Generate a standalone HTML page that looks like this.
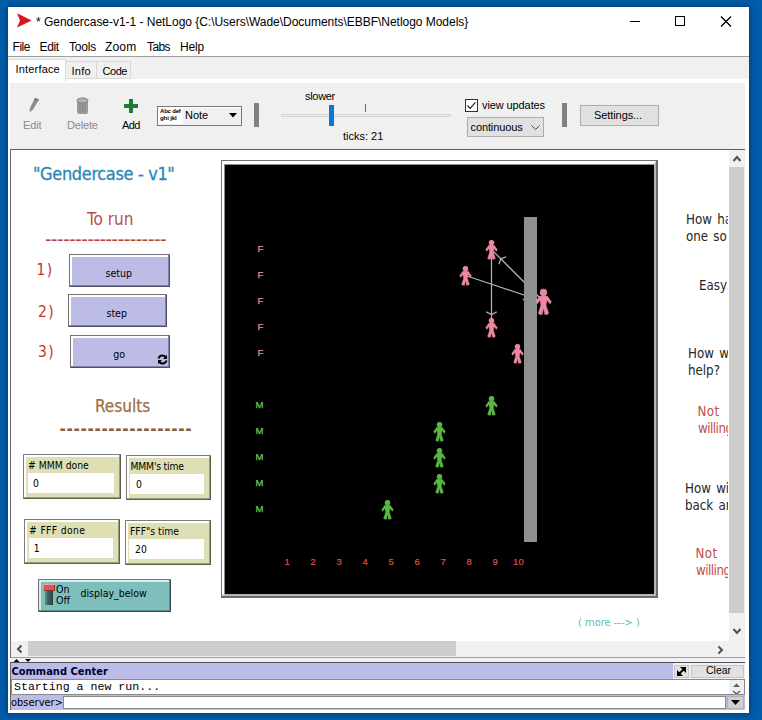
<!DOCTYPE html>
<html><head><meta charset="utf-8">
<style>
html,body{margin:0;padding:0;}
body{width:762px;height:720px;overflow:hidden;background:#005eab;position:relative;font-family:"Liberation Sans",sans-serif;font-size:12px;color:#000;}
.a{position:absolute;}
.t{position:absolute;white-space:nowrap;line-height:1;}
.w{font-family:"DejaVu Sans Condensed","DejaVu Sans","Liberation Sans",sans-serif;}
.btn{position:absolute;background:#bcbce6;box-sizing:border-box;box-shadow:inset 1px 1px 0 #747474, inset -1px -1px 0 #50506a, inset -2px -2px 0 #8282a6, inset 3px 3px 0 #fff;}
.mon{position:absolute;background:#dfdfb6;box-sizing:border-box;box-shadow:inset 1px 1px 0 #7c7c7c, inset -1px -1px 0 #606050, inset -2px -2px 0 #9a9a7c, inset 3px 3px 0 #fff;}
.mon .v{position:absolute;left:5px;right:7px;top:19px;height:20px;background:#fff;}
</style></head>
<body>
<!-- desktop / window frame -->
<div class="a" style="left:0;top:0;width:762px;height:720px;background:#005eab;"></div>
<div class="a" id="win" style="left:8px;top:7px;width:741px;height:706px;background:#fff;box-shadow:0 0 7px 1px rgba(0,30,70,.55);"></div>

<!-- title bar -->
<svg class="a" style="left:17px;top:13px" width="16" height="16" viewBox="0 0 16 16"><polygon points="0,0.300 14.700,7.400 0,14.500 3,7.400" fill="#d8151a"/></svg>
<div class="t" id="title" style="left:36px;top:16px;font-size:12px;letter-spacing:-0.03px;">* Gendercase-v1-1 - NetLogo {C:\Users\Wade\Documents\EBBF\Netlogo Models}</div>
<svg class="a" style="left:620px;top:11px" width="124" height="22" viewBox="0 0 124 22" fill="none" stroke="#000" stroke-width="1">
<path d="M10 10.5h10"/><rect x="55.5" y="5.500" width="9" height="9"/><path d="M101 5.500l10 10M111 5.500l-10 10" stroke-width="1.300"/></svg>

<!-- menu bar -->
<div class="t" style="left:12.500px;top:41px;font-size:12px;letter-spacing:-0.45px;">File</div>
<div class="t" style="left:39.500px;top:41px;font-size:12px;letter-spacing:-0.35px;">Edit</div>
<div class="t" style="left:69px;top:41px;font-size:12px;letter-spacing:-0.2px;">Tools</div>
<div class="t" style="left:105px;top:41px;font-size:12px;letter-spacing:0.15px;">Zoom</div>
<div class="t" style="left:147px;top:41px;font-size:12px;letter-spacing:-0.6px;">Tabs</div>
<div class="t" style="left:180px;top:41px;font-size:12px;letter-spacing:-0.2px;">Help</div>
<div class="a" style="left:8px;top:56px;width:741px;height:1px;background:#a0a0a0;"></div>

<!-- tab strip + pane background -->
<div class="a" style="left:8px;top:57px;width:741px;height:652px;background:#f0f0f0;"></div>
<div class="a" style="left:8px;top:79px;width:741px;height:4px;background:#fff;"></div>
<div class="a" style="left:8px;top:80px;width:2px;height:633px;background:#fff;"></div>
<div class="a" style="left:745px;top:80px;width:4px;height:633px;background:#fff;"></div>
<div class="a" style="left:8px;top:710px;width:741px;height:3px;background:#fff;"></div>
<div class="a" style="left:66px;top:61px;width:31px;height:18px;box-sizing:border-box;border:1px solid #d9d9d9;border-left:none;background:#f0f0f0;"></div>
<div class="a" style="left:97px;top:61px;width:34px;height:18px;box-sizing:border-box;border:1px solid #d9d9d9;border-left:none;background:#f0f0f0;"></div>
<div class="a" style="left:8px;top:59px;width:58px;height:23px;background:#fff;border-right:1px solid #d9d9d9;border-top:1px solid #d9d9d9;box-sizing:border-box;"></div>
<div class="t" style="left:15.500px;top:64px;font-size:11px;letter-spacing:0.18px;">Interface</div>
<div class="t" style="left:71.500px;top:66px;font-size:11px;letter-spacing:0.27px;">Info</div>
<div class="t" style="left:102.500px;top:66px;font-size:11px;letter-spacing:-0.45px;">Code</div>

<!-- toolbar -->
<div class="a" style="left:10px;top:149px;width:735px;height:1px;background:#5f5f5f;"></div>
<div class="a" style="left:10px;top:149px;width:1px;height:509px;background:#6a6a6a;"></div>
<div class="a" style="left:10px;top:662px;width:1px;height:48px;background:#6a6a6a;"></div>
<svg class="a" style="left:24px;top:96px" width="20" height="20" viewBox="0 0 20 20"><polygon points="11,2 15,3.500 9,13.500 5.500,16.500 6,12" fill="#8c8c8c"/><polygon points="11,2 15,3.500 14,5.300 10,3.800" fill="#757575"/></svg>
<div class="t" style="left:23px;top:120px;font-size:11px;letter-spacing:-0.15px;color:#8a8a8a;">Edit</div>
<svg class="a" style="left:73px;top:95px" width="20" height="22" viewBox="0 0 20 22"><path d="M4 6h11v11q0 2-2 2h-7q-2 0-2-2z" fill="#9a9a9a"/><ellipse cx="9.500" cy="5.500" rx="5.500" ry="2.500" fill="#b4b4b4" stroke="#7c7c7c" stroke-width="1"/><path d="M7 9v8M9.500 9v8M12 9v8" stroke="#858585" stroke-width="1"/></svg>
<div class="t" style="left:67px;top:120px;font-size:11px;letter-spacing:-0.18px;color:#8a8a8a;">Delete</div>
<svg class="a" style="left:122px;top:97px" width="18" height="18" viewBox="0 0 18 18"><path d="M7 2h4v5h5v4h-5v5h-4v-5h-5v-4h5z" fill="#1e7b34"/></svg>
<div class="t" style="left:122px;top:120px;font-size:11px;letter-spacing:-0.57px;">Add</div>
<!-- note combo -->
<div class="a" style="left:157px;top:106px;width:85px;height:20px;box-sizing:border-box;border:1px solid #7a7a7a;background:#f0f0f0;box-shadow:inset 1px 1px 0 #fff;"></div>
<div class="a" style="left:159px;top:108px;width:24px;height:16px;background:#fff;"></div>
<div class="t" style="left:160px;top:108px;font-size:6px;font-weight:bold;letter-spacing:-0.2px;">Abc def</div>
<div class="t" style="left:160px;top:115px;font-size:6px;font-weight:bold;letter-spacing:-0.1px;">ghi jkl</div>
<div class="t" style="left:185px;top:110px;font-size:11px;">Note</div>
<svg class="a" style="left:229px;top:113px" width="8" height="5" viewBox="0 0 8 5"><polygon points="0,0 8,0 4,4.500" fill="#000"/></svg>
<div class="a" style="left:254px;top:103px;width:5px;height:24px;background:#808080;"></div>
<!-- speed slider -->
<div class="t" style="left:305px;top:91px;font-size:11px;letter-spacing:-0.3px;">slower</div>
<div class="a" style="left:281px;top:114px;width:170px;height:3px;box-sizing:border-box;border:1px solid #d6d6d6;background:#e7eaea;"></div>
<div class="a" style="left:365px;top:104px;width:1px;height:8px;background:#6a6a6a;"></div>
<div class="a" style="left:329px;top:105px;width:5px;height:21px;background:#0a78d6;"></div>
<div class="t" style="left:343px;top:131px;font-size:11px;">ticks: 21</div>
<!-- view updates -->
<div class="a" style="left:465px;top:99px;width:13px;height:13px;box-sizing:border-box;border:1px solid #333;background:#fff;"></div>
<svg class="a" style="left:465px;top:99px" width="13" height="13" viewBox="0 0 13 13"><path d="M2.500 6.500l2.700 2.800l5.200-6" fill="none" stroke="#222" stroke-width="1.200"/></svg>
<div class="t" style="left:482px;top:100px;font-size:11px;letter-spacing:-0.1px;">view updates</div>
<div class="a" style="left:467px;top:117px;width:77px;height:20px;box-sizing:border-box;border:1px solid #adadad;background:#e1e1e1;"></div>
<div class="t" style="left:470.500px;top:122px;font-size:11px;letter-spacing:-0.12px;">continuous</div>
<svg class="a" style="left:531px;top:125px" width="10" height="6" viewBox="0 0 10 6"><path d="M0.500 0.500l4 4l4-4" fill="none" stroke="#444" stroke-width="1"/></svg>
<div class="a" style="left:562px;top:103px;width:5px;height:24px;background:#808080;"></div>
<div class="a" style="left:580px;top:105px;width:79px;height:21px;box-sizing:border-box;border:1px solid #adadad;background:#e1e1e1;"></div>
<div class="t" style="left:594px;top:110px;font-size:11px;letter-spacing:-0.08px;">Settings...</div>

<!-- workspace -->
<div class="a" id="ws" style="left:11px;top:150px;width:717px;height:491px;background:#fff;overflow:hidden;">
<div class="a" style="left:-11px;top:-150px;width:762px;height:720px;">
<!-- notes -->
<div class="t w" style="left:33px;top:165px;font-size:18px;letter-spacing:-0.35px;color:#2c86b8;-webkit-text-stroke:0.3px #2c86b8;">"Gendercase - v1"</div>
<div class="t w" style="left:87px;top:211px;font-size:17px;color:#b94f4a;">To run</div>
<div class="t w" style="left:45px;top:229px;font-size:20px;letter-spacing:-0.44px;color:#b3443e;">--------------------</div>
<div class="t w" style="left:36.500px;top:263px;font-size:15.500px;letter-spacing:1.500px;color:#c6302a;">1)</div>
<div class="t w" style="left:38px;top:305px;font-size:15.500px;letter-spacing:1.500px;color:#c6302a;">2)</div>
<div class="t w" style="left:38px;top:345px;font-size:15.500px;letter-spacing:1.500px;color:#c6302a;">3)</div>
<div class="btn" style="left:69px;top:254px;width:101px;height:33px;"></div>
<div class="t w" style="left:105.500px;top:268px;font-size:10.500px;">setup</div>
<div class="btn" style="left:68px;top:294px;width:99px;height:33px;"></div>
<div class="t w" style="left:106.500px;top:308px;font-size:10.500px;">step</div>
<div class="btn" style="left:70px;top:335px;width:100px;height:33px;"></div>
<div class="t w" style="left:113.200px;top:349px;font-size:10.500px;">go</div>
<svg class="a" style="left:156.500px;top:354px" width="11" height="11" viewBox="0 0 11 11"><path d="M1.500 4.500a4 4 0 0 1 7-1.500M9.500 6.500a4 4 0 0 1-7 1.500" fill="none" stroke="#000" stroke-width="2.100"/><polygon points="10,1 10,5 6,5" fill="#000"/><polygon points="1,10 1,6 5,6" fill="#000"/></svg>
<div class="t w" style="left:95px;top:398px;font-size:17px;color:#9d6e48;-webkit-text-stroke:0.25px #9d6e48;">Results</div>
<div class="t w" style="left:59.500px;top:421px;font-size:17px;font-weight:bold;letter-spacing:0.630px;color:#8a5e3f;">-------------------</div>
<!-- monitors -->
<div class="mon" style="left:23px;top:454px;width:98px;height:45px;"><div class="v"></div></div>
<div class="t w" style="left:28px;top:460px;font-size:10.300px;"># MMM done</div>
<div class="t w" style="left:33px;top:478px;font-size:10.300px;">0</div>
<div class="mon" style="left:126px;top:455px;width:85px;height:45px;"><div class="v" style="left:4px;"></div></div>
<div class="t w" style="left:130.500px;top:461px;font-size:10.300px;letter-spacing:-0.2px;">MMM's time</div>
<div class="t w" style="left:136px;top:479px;font-size:10.300px;">0</div>
<div class="mon" style="left:24px;top:519px;width:96px;height:45px;"><div class="v"></div></div>
<div class="t w" style="left:29px;top:525px;font-size:10.300px;letter-spacing:0.35px;"># FFF done</div>
<div class="t w" style="left:33.700px;top:543px;font-size:10.300px;">1</div>
<div class="mon" style="left:125px;top:520px;width:86px;height:45px;"><div class="v" style="left:4px;"></div></div>
<div class="t w" style="left:130px;top:526px;font-size:10.300px;">FFF"s time</div>
<div class="t w" style="left:135px;top:544px;font-size:10.300px;">20</div>
<!-- switch -->
<div class="btn" style="left:38px;top:579px;width:133px;height:33px;background:#7fbfbb;box-shadow:inset 1px 1px 0 #747474, inset -1px -1px 0 #35504f, inset -2px -2px 0 #5b8a87, inset 3px 3px 0 #d9eeec;"></div>
<div class="a" style="left:45px;top:590px;width:8px;height:15px;background:linear-gradient(90deg,#62908c 0,#3f605e 40%,#274240 100%);"></div>
<div class="a" style="left:43px;top:584px;width:12px;height:7px;background:#d9585d;box-shadow:inset 0 1px 0 #eea0a2, inset 1px 0 0 #e88b8e, inset -1px -1px 0 #8e3236;"></div>
<div class="t w" style="left:56px;top:584px;font-size:10.500px;">On</div>
<div class="t w" style="left:56px;top:595px;font-size:10.500px;">Off</div>
<div class="t w" style="left:80.500px;top:588px;font-size:10.500px;">display_below</div>
<!-- VIEW -->
<div class="a" style="left:221px;top:160px;width:437px;height:438px;box-sizing:border-box;border-style:solid;border-width:1px 2px 2px 1px;border-color:#707070 #6c6c6c #6c6c6c #707070;background:#fff;"></div>
<div class="a" style="left:222px;top:161px;width:434px;height:435px;box-sizing:border-box;border-style:solid;border-width:3px 2px 2px 2px;border-color:#fff #b6b6b6 #b6b6b6 #fff;background:#8c8c8c;"></div>
<div class="a" style="left:225px;top:165px;width:429px;height:429px;background:#000;"></div>
<svg class="a" id="view" style="left:225px;top:165px" width="429" height="429" viewBox="0 0 429 429">
<rect x="299" y="52" width="13" height="325" fill="#8f8f8f"/>
<line x1="318.5" y1="136.5" x2="266.5" y2="84.5" stroke="#b2b2b2" stroke-width="1.25"/>
<polyline points="281.2,91.9 275.7,93.7 273.9,99.2" fill="none" stroke="#b2b2b2" stroke-width="1.25"/>
<line x1="240.5" y1="110.5" x2="318.5" y2="136.5" stroke="#b2b2b2" stroke-width="1.25"/>
<polyline points="297.9,135.1 302.1,131.0 301.2,125.3" fill="none" stroke="#b2b2b2" stroke-width="1.25"/>
<line x1="266.5" y1="84.5" x2="266.5" y2="162.5" stroke="#b2b2b2" stroke-width="1.25"/>
<polyline points="261.3,146.9 266.5,149.5 271.7,146.9" fill="none" stroke="#b2b2b2" stroke-width="1.25"/>
<rect x="299" y="52" width="13" height="325" fill="#8f8f8f"/>
<g transform="translate(256.75,74.75) scale(0.0650)" fill="#ee87a2" stroke="#ee87a2" stroke-width="5" stroke-linejoin="round"><circle cx="150" cy="45" r="40"/><polygon points="105,90 120,195 90,285 105,300 135,300 150,225 165,300 195,300 210,285 180,195 195,90"/><rect x="127" y="79" width="45" height="15"/><polygon points="195,90 240,150 225,180 165,105"/><polygon points="105,90 60,150 75,180 135,105"/></g>
<g transform="translate(230.75,100.75) scale(0.0650)" fill="#ee87a2" stroke="#ee87a2" stroke-width="5" stroke-linejoin="round"><circle cx="150" cy="45" r="40"/><polygon points="105,90 120,195 90,285 105,300 135,300 150,225 165,300 195,300 210,285 180,195 195,90"/><rect x="127" y="79" width="45" height="15"/><polygon points="195,90 240,150 225,180 165,105"/><polygon points="105,90 60,150 75,180 135,105"/></g>
<g transform="translate(256.75,152.75) scale(0.0650)" fill="#ee87a2" stroke="#ee87a2" stroke-width="5" stroke-linejoin="round"><circle cx="150" cy="45" r="40"/><polygon points="105,90 120,195 90,285 105,300 135,300 150,225 165,300 195,300 210,285 180,195 195,90"/><rect x="127" y="79" width="45" height="15"/><polygon points="195,90 240,150 225,180 165,105"/><polygon points="105,90 60,150 75,180 135,105"/></g>
<g transform="translate(305.50,123.50) scale(0.0867)" fill="#ee87a2" stroke="#ee87a2" stroke-width="5" stroke-linejoin="round"><circle cx="150" cy="45" r="40"/><polygon points="105,90 120,195 90,285 105,300 135,300 150,225 165,300 195,300 210,285 180,195 195,90"/><rect x="127" y="79" width="45" height="15"/><polygon points="195,90 240,150 225,180 165,105"/><polygon points="105,90 60,150 75,180 135,105"/></g>
<g transform="translate(282.75,178.75) scale(0.0650)" fill="#ee87a2" stroke="#ee87a2" stroke-width="5" stroke-linejoin="round"><circle cx="150" cy="45" r="40"/><polygon points="105,90 120,195 90,285 105,300 135,300 150,225 165,300 195,300 210,285 180,195 195,90"/><rect x="127" y="79" width="45" height="15"/><polygon points="195,90 240,150 225,180 165,105"/><polygon points="105,90 60,150 75,180 135,105"/></g>
<g transform="translate(256.75,230.75) scale(0.0650)" fill="#59b845" stroke="#59b845" stroke-width="5" stroke-linejoin="round"><circle cx="150" cy="45" r="40"/><polygon points="105,90 120,195 90,285 105,300 135,300 150,225 165,300 195,300 210,285 180,195 195,90"/><rect x="127" y="79" width="45" height="15"/><polygon points="195,90 240,150 225,180 165,105"/><polygon points="105,90 60,150 75,180 135,105"/></g>
<g transform="translate(204.75,256.75) scale(0.0650)" fill="#59b845" stroke="#59b845" stroke-width="5" stroke-linejoin="round"><circle cx="150" cy="45" r="40"/><polygon points="105,90 120,195 90,285 105,300 135,300 150,225 165,300 195,300 210,285 180,195 195,90"/><rect x="127" y="79" width="45" height="15"/><polygon points="195,90 240,150 225,180 165,105"/><polygon points="105,90 60,150 75,180 135,105"/></g>
<g transform="translate(204.75,282.75) scale(0.0650)" fill="#59b845" stroke="#59b845" stroke-width="5" stroke-linejoin="round"><circle cx="150" cy="45" r="40"/><polygon points="105,90 120,195 90,285 105,300 135,300 150,225 165,300 195,300 210,285 180,195 195,90"/><rect x="127" y="79" width="45" height="15"/><polygon points="195,90 240,150 225,180 165,105"/><polygon points="105,90 60,150 75,180 135,105"/></g>
<g transform="translate(204.75,308.75) scale(0.0650)" fill="#59b845" stroke="#59b845" stroke-width="5" stroke-linejoin="round"><circle cx="150" cy="45" r="40"/><polygon points="105,90 120,195 90,285 105,300 135,300 150,225 165,300 195,300 210,285 180,195 195,90"/><rect x="127" y="79" width="45" height="15"/><polygon points="195,90 240,150 225,180 165,105"/><polygon points="105,90 60,150 75,180 135,105"/></g>
<g transform="translate(152.75,334.75) scale(0.0650)" fill="#59b845" stroke="#59b845" stroke-width="5" stroke-linejoin="round"><circle cx="150" cy="45" r="40"/><polygon points="105,90 120,195 90,285 105,300 135,300 150,225 165,300 195,300 210,285 180,195 195,90"/><rect x="127" y="79" width="45" height="15"/><polygon points="195,90 240,150 225,180 165,105"/><polygon points="105,90 60,150 75,180 135,105"/></g>
<text x="38.400" y="87.0" text-anchor="end" font-family="Liberation Sans, sans-serif" font-size="9.500" fill="#ee87a2" stroke="#ee87a2" stroke-width="0.25">F</text>
<text x="38.400" y="113.0" text-anchor="end" font-family="Liberation Sans, sans-serif" font-size="9.500" fill="#ee87a2" stroke="#ee87a2" stroke-width="0.25">F</text>
<text x="38.400" y="139.0" text-anchor="end" font-family="Liberation Sans, sans-serif" font-size="9.500" fill="#ee87a2" stroke="#ee87a2" stroke-width="0.25">F</text>
<text x="38.400" y="165.0" text-anchor="end" font-family="Liberation Sans, sans-serif" font-size="9.500" fill="#ee87a2" stroke="#ee87a2" stroke-width="0.25">F</text>
<text x="38.400" y="191.0" text-anchor="end" font-family="Liberation Sans, sans-serif" font-size="9.500" fill="#ee87a2" stroke="#ee87a2" stroke-width="0.25">F</text>
<text x="38.400" y="243.0" text-anchor="end" font-family="Liberation Sans, sans-serif" font-size="9.500" fill="#74c45f" stroke="#74c45f" stroke-width="0.25">M</text>
<text x="38.400" y="269.0" text-anchor="end" font-family="Liberation Sans, sans-serif" font-size="9.500" fill="#74c45f" stroke="#74c45f" stroke-width="0.25">M</text>
<text x="38.400" y="295.0" text-anchor="end" font-family="Liberation Sans, sans-serif" font-size="9.500" fill="#74c45f" stroke="#74c45f" stroke-width="0.25">M</text>
<text x="38.400" y="321.0" text-anchor="end" font-family="Liberation Sans, sans-serif" font-size="9.500" fill="#74c45f" stroke="#74c45f" stroke-width="0.25">M</text>
<text x="38.400" y="347.0" text-anchor="end" font-family="Liberation Sans, sans-serif" font-size="9.500" fill="#74c45f" stroke="#74c45f" stroke-width="0.25">M</text>
<text x="64.7" y="399.5" text-anchor="end" font-family="Liberation Sans, sans-serif" font-size="9.500" fill="#d9534a" stroke="#d9534a" stroke-width="0.2">1</text>
<text x="90.7" y="399.5" text-anchor="end" font-family="Liberation Sans, sans-serif" font-size="9.500" fill="#d9534a" stroke="#d9534a" stroke-width="0.2">2</text>
<text x="116.7" y="399.5" text-anchor="end" font-family="Liberation Sans, sans-serif" font-size="9.500" fill="#d9534a" stroke="#d9534a" stroke-width="0.2">3</text>
<text x="142.7" y="399.5" text-anchor="end" font-family="Liberation Sans, sans-serif" font-size="9.500" fill="#d9534a" stroke="#d9534a" stroke-width="0.2">4</text>
<text x="168.7" y="399.5" text-anchor="end" font-family="Liberation Sans, sans-serif" font-size="9.500" fill="#d9534a" stroke="#d9534a" stroke-width="0.2">5</text>
<text x="194.7" y="399.5" text-anchor="end" font-family="Liberation Sans, sans-serif" font-size="9.500" fill="#d9534a" stroke="#d9534a" stroke-width="0.2">6</text>
<text x="220.7" y="399.5" text-anchor="end" font-family="Liberation Sans, sans-serif" font-size="9.500" fill="#d9534a" stroke="#d9534a" stroke-width="0.2">7</text>
<text x="246.7" y="399.5" text-anchor="end" font-family="Liberation Sans, sans-serif" font-size="9.500" fill="#d9534a" stroke="#d9534a" stroke-width="0.2">8</text>
<text x="272.7" y="399.5" text-anchor="end" font-family="Liberation Sans, sans-serif" font-size="9.500" fill="#d9534a" stroke="#d9534a" stroke-width="0.2">9</text>
<text x="298.7" y="399.5" text-anchor="end" font-family="Liberation Sans, sans-serif" font-size="9.500" fill="#d9534a" stroke="#d9534a" stroke-width="0.2">10</text>
</svg>
<!-- right notes -->
<div class="t w" style="left:686px;top:213px;font-size:13.200px;word-spacing:1.500px;color:#262626;">How hard is it to find some-</div>
<div class="t w" style="left:686px;top:230px;font-size:13.200px;word-spacing:1.500px;color:#262626;">one so</div>
<div class="t w" style="left:699px;top:279px;font-size:13.200px;word-spacing:1.500px;color:#262626;">Easy</div>
<div class="t w" style="left:688px;top:347px;font-size:13.200px;word-spacing:1.500px;color:#262626;">How willing</div>
<div class="t w" style="left:688px;top:364px;font-size:13.200px;word-spacing:1.500px;color:#262626;">help?</div>
<div class="t w" style="left:697.500px;top:405px;font-size:13.200px;letter-spacing:0.4px;color:#c24e49;">Not</div>
<div class="t w" style="left:698px;top:422px;font-size:13.200px;letter-spacing:-0.5px;color:#c24e49;">willing</div>
<div class="t w" style="left:685px;top:482px;font-size:13.200px;word-spacing:1.500px;color:#262626;">How willing</div>
<div class="t w" style="left:685px;top:499px;font-size:13.200px;word-spacing:1.500px;color:#262626;">back and</div>
<div class="t w" style="left:695.500px;top:547px;font-size:13.200px;letter-spacing:0.4px;color:#c24e49;">Not</div>
<div class="t w" style="left:696px;top:564px;font-size:13.200px;letter-spacing:-0.5px;color:#c24e49;">willing</div>
<div class="t w" style="left:578px;top:617px;font-size:11px;color:#62bdb8;">( more ---&gt; )</div>
</div>
</div>
<!-- vertical scrollbar -->
<div class="a" style="left:729px;top:150px;width:16px;height:507px;background:#f0f0f0;"></div>
<div class="a" style="left:728px;top:150px;width:1px;height:491px;background:#fff;"></div>
<div class="a" style="left:729px;top:167px;width:15px;height:446px;background:#cdcdcd;"></div>
<svg class="a" style="left:732px;top:155px" width="10" height="7" viewBox="0 0 10 7"><path d="M1.500 6l3.500-4l3.500 4" fill="none" stroke="#505050" stroke-width="2"/></svg>
<svg class="a" style="left:732px;top:628px" width="10" height="7" viewBox="0 0 10 7"><path d="M1.500 1l3.500 4l3.500-4" fill="none" stroke="#505050" stroke-width="2"/></svg>
<!-- horizontal scrollbar -->
<div class="a" style="left:11px;top:641px;width:718px;height:16px;background:#f0f0f0;"></div>
<div class="a" style="left:28px;top:641px;width:428px;height:15px;background:#cdcdcd;"></div>
<svg class="a" style="left:16px;top:644px" width="7" height="10" viewBox="0 0 7 10"><path d="M5.500 1.500l-3.500 3.500l3.500 3.500" fill="none" stroke="#505050" stroke-width="2"/></svg>
<svg class="a" style="left:717px;top:645px" width="7" height="10" viewBox="0 0 7 10"><path d="M1.500 1.500l3.500 3.500l-3.500 3.500" fill="none" stroke="#505050" stroke-width="2"/></svg>
<div class="a" style="left:11px;top:657px;width:734px;height:1px;background:#a0a0a0;"></div>
<!-- splitter -->
<div class="a" style="left:11px;top:658px;width:734px;height:4px;background:#f0f0f0;"></div>
<svg class="a" style="left:12px;top:658px" width="24" height="4" viewBox="0 0 24 4"><polygon points="1.500,4 4.500,1 7.500,4" fill="#000"/><polygon points="13,1 19,1 16,4" fill="#000"/></svg>
<!-- command center -->
<div class="a" style="left:11px;top:662px;width:734px;height:1px;background:#50505a;"></div>
<div class="a" style="left:11px;top:663px;width:734px;height:47px;background:#bcbce6;"></div>
<div class="t w" style="left:11.500px;top:666px;font-size:11px;font-weight:bold;color:#00002a;">Command Center</div>
<div class="a" style="left:673px;top:663px;width:72px;height:17px;background:#f0f0f0;"></div>
<div class="a" style="left:674px;top:665px;width:15px;height:13px;background:#e1e1e1;box-sizing:border-box;border:1px solid #c4c4c4;"></div>
<svg class="a" style="left:676px;top:666px" width="11" height="11" viewBox="0 0 11 11"><path d="M2.500 8.500l6-6" stroke="#000" stroke-width="1.800"/><polygon points="4,1 10,1 10,7" fill="#000"/><polygon points="1,4 1,10 7,10" fill="#000"/></svg>
<div class="a" style="left:691px;top:665px;width:53px;height:13px;background:#e1e1e1;box-sizing:border-box;border:1px solid #c4c4c4;"></div>
<div class="t" style="left:706px;top:665px;font-size:10.500px;">Clear</div>
<div class="a" style="left:11px;top:679px;width:734px;height:16px;background:#fff;box-sizing:border-box;border:1px solid #8a8a8a;"></div>
<div class="t" style="left:14px;top:681px;font-size:11.600px;font-family:'Liberation Mono','DejaVu Sans Mono',monospace;">Starting a new run...</div>
<div class="a" style="left:729px;top:680px;width:15px;height:14px;background:#f0f0f0;"></div>
<svg class="a" style="left:732px;top:683px" width="9" height="11" viewBox="0 0 9 11"><polygon points="1,4 4.500,0.500 8,4" fill="#606060"/><path d="M1 8l3.500 3l3.500-3" fill="none" stroke="#606060" stroke-width="1.500"/></svg>
<div class="t w" style="left:11px;top:697px;font-size:11px;">observer&gt;</div>
<div class="a" style="left:63px;top:696px;width:663px;height:13px;background:#fff;box-sizing:border-box;border:1px solid #8a8a8a;"></div>
<div class="a" style="left:727px;top:696px;width:17px;height:13px;background:#d0d0d0;box-sizing:border-box;border:1px solid #b0b0b0;"></div>
<svg class="a" style="left:731px;top:700px" width="9" height="5" viewBox="0 0 9 5"><polygon points="0,0 9,0 4.500,5" fill="#000"/></svg>
</body></html>
